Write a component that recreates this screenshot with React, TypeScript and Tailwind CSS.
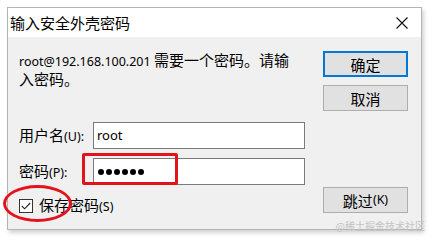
import type { ReactNode } from "react";

const cjk = '"Noto Sans CJK SC", "Noto Sans", sans-serif';

function Lat({ children }: { children: ReactNode }) {
  return <span className="font-['Noto_Sans'] text-[12.5px]">{children}</span>;
}

function Btn({ children, primary }: { children: ReactNode; primary?: boolean }) {
  return (
    <button
      className={
        "flex h-[26px] w-[85px] items-center justify-center bg-[#e1e1e1] text-[15px] leading-none text-black " +
        (primary ? "border-2 border-[#0078d7]" : "border border-[#adadad]")
      }
    >
      {children}
    </button>
  );
}

export default function App() {
  return (
    <div
      className="relative h-[243px] w-[434px] overflow-hidden bg-white pl-[7px] pt-[7px] text-black"
      style={{ fontFamily: cjk }}
    >
      <div className="flex h-[223px] w-[415px] flex-col border border-[#b4b4b4] shadow-[2px_3px_4px_rgba(0,0,0,0.18)]">
        {/* title bar */}
        <div className="flex h-[29px] items-center justify-between bg-white pl-[2px] pr-[13px]">
          <span className="text-[15px] leading-none">输入安全外壳密码</span>
          <svg width="12" height="12" viewBox="0 0 12 12" className="mt-[1px]">
            <path d="M0.5 0.5 L11.5 11.5 M11.5 0.5 L0.5 11.5" stroke="#111" strokeWidth="1.1" />
          </svg>
        </div>

        {/* body */}
        <div className="flex flex-1 gap-[18px] bg-[#f0f0f0] pl-[11px] pr-[12px] pt-[14px]">
          <div className="w-[286px]">
            <p className="text-[15px] leading-[17px]">
              <Lat>root@192.168.100.201</Lat> 需要一个密码。请输
              <br />
              入密码。
            </p>

            <div className="mt-[35px] flex items-center">
              <label className="w-[74px] text-[15px] leading-[17px]">
                用户名<Lat>(U):</Lat>
              </label>
              <div className="flex h-[27px] w-[212px] items-center border border-[#7a7a7a] bg-white pl-[3px]">
                <span className="font-['Noto_Sans'] text-[13px] leading-none">root</span>
              </div>
            </div>

            <div className="mt-[9px] flex items-center">
              <label className="w-[74px] text-[15px] leading-[17px]">
                密码<Lat>(P):</Lat>
              </label>
              <div className="flex h-[27px] w-[212px] items-center gap-[2px] border border-[#7a7a7a] bg-white pl-[4px]">
                {[0, 1, 2, 3, 4, 5].map((i) => (
                  <span key={i} className="h-[6px] w-[6px] rounded-full bg-black" />
                ))}
              </div>
            </div>

            <div className="mt-[11px] flex items-center">
              <span className="flex h-[14px] w-[14px] items-center justify-center border border-[#333] bg-white">
                <svg width="10" height="8" viewBox="0 0 10 8">
                  <path d="M0.8 4 L3.6 6.8 L9.2 1" fill="none" stroke="#222" strokeWidth="1.1" />
                </svg>
              </span>
              <span className="ml-[6px] text-[15px] leading-[17px]">
                保存密码<Lat>(S)</Lat>
              </span>
            </div>
          </div>

          <div className="flex w-[85px] flex-col">
            <Btn primary>确定</Btn>
            <div className="mt-[8px]">
              <Btn>取消</Btn>
            </div>
            <div className="mt-[76px]">
              <Btn>
                跳过<Lat>(K)</Lat>
              </Btn>
            </div>
          </div>
        </div>
      </div>

      {/* red annotations */}
      <div className="absolute left-[82px] top-[153px] h-[32px] w-[96px] rounded-[2px] border-[3px] border-[#e3121b]" />
      <div className="absolute left-[3px] top-[185px] h-[37px] w-[69px] rounded-[50%] border-[3px] border-[#e3121b]" />

      {/* watermark */}
      <div className="absolute right-[9px] top-[221px] text-[10px] leading-none text-[#c4c4c4]">
        @稀土掘金技术社区
      </div>
    </div>
  );
}
